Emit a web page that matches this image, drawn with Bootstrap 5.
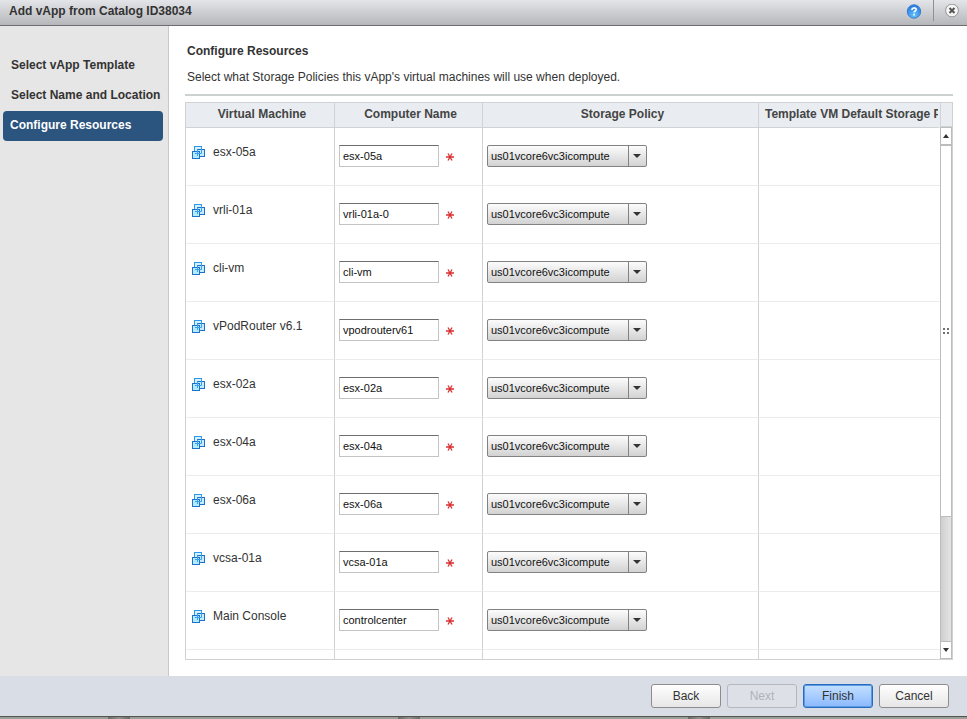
<!DOCTYPE html>
<html lang="en">
<head>
<meta charset="utf-8">
<meta name="viewport" content="width=device-width, initial-scale=1">
<title>Add vApp from Catalog ID38034</title>
<link href="https://cdn.jsdelivr.net/npm/bootstrap@5.3.0/dist/css/bootstrap.min.css" rel="stylesheet">
<style>
  body { font-family: "Liberation Sans", Arial, sans-serif; font-size: 12px; line-height: 18px; color: #333; background: #9b9f9a; }
  .titlebar { height: 26px; padding: 0 6px 0 9px; background: linear-gradient(#e4e5e8, #b6b7bb); border-bottom: 1px solid #6c6d71; }
  .titlebar h1 { font-size: 12px; line-height: 22px; }
  .tool { width: 16px; height: 16px; line-height: 0; }
  .tool-rule { width: 1px; height: 21px; background: #8f9095; margin: 0 11px; }
  .steps { width: 169px; padding: 24px 5px 0 3px; background: #e6e6e6; border-right: 1px solid #c8c8c8; }
  .step { height: 30px; padding: 0 0 0 8px; line-height: 30px; font-weight: bold; color: #333; text-decoration: none; white-space: nowrap; }
  .step.current { height: 30px; padding-left: 7px; line-height: 28px; margin-top: 1px; background: #2b547e; color: #fff; border-radius: 4px; }
  .content { padding: 16px 14px 16px 16px; }
  .content h2 { font-size: 12px; line-height: 18px; padding-left: 2px; }
  .intro { padding: 0 0 8px 2px; margin-top: 8px; border-bottom: 2px solid #ccd1d2; }
  .frame { margin-top: 6px; border: 1px solid #d0d2d3; }
  .vm-grid { table-layout: fixed; border-collapse: separate; border-spacing: 0; width: 100%; }
  .vm-grid th { height: 25px; padding: 0 0 2px 4px; line-height: 20px; text-align: center; background: #e9edf1; border-bottom: 1px solid #d0d2d3; border-right: 1px solid #d0d2d3; white-space: nowrap; overflow: hidden; color: #444; }
  .vm-grid th:last-child { text-align: left; padding-left: 6px; border-right: 2px solid #e9edf1; }
  .vm-grid td { height: 58px; padding: 17px 4px 0; vertical-align: top; border-bottom: 1px solid #ececec; border-right: 1px solid #d0d2d3; }
  .vm-grid td:first-child { padding: 15px 0 0 6px; }
  .vm-grid td:last-child { border-right: 0; }
  .c1 { width: 149px; } .c2 { width: 148px; } .c3 { width: 276px; }
  .vm-icon { width: 13px; height: 13px; margin: 3px 8px 0 0; }
  .name-box { width: 100px; height: 22px; padding: 0 3px; border: 1px solid #c4c4c4; border-top-color: #6e6e6e; font-size: 11px; color: #111; background: #fff; border-radius: 0; }
  .star { width: 8px; height: 8px; margin: 2px 0 0 7px; }
  .pick { width: 160px; height: 22px; }
  .pick select { appearance: none; width: 100%; height: 22px; padding: 0 20px 0 3px; border: 1px solid #828282; border-radius: 2px; font-size: 11px; color: #111; background: linear-gradient(#828282, #828282) right 17px top / 1px 100% no-repeat, linear-gradient(#fcfcfc, #d2d2d2); }
  .pick::after { content: ""; position: absolute; right: 6px; top: 9px; border: 4px solid transparent; border-top: 4px solid #333; border-bottom: 0; pointer-events: none; }
  .scroller { width: 12px; }
  .corner { height: 24px; background: #e9edf1; border-left: 1px solid #d0d2d3; border-bottom: 1px solid #d0d2d3; }
  .track { background: linear-gradient(90deg, #cfcfcf, #e4e4e4); border: solid #bcbcbc; border-width: 0 1px; }
  .arrow { width: 12px; height: 18px; padding: 0; border: 1px solid #bcbcbc; background: #fff; line-height: 0; }
  .thumb { height: 75%; background: #fff; border: solid #bcbcbc; border-width: 1px 0; }
  .dialog-foot { height: 41px; padding: 8px 18px 0 0; gap: 6px; background: #d9dee6; border-bottom: 1px solid #50544f; }
  .act { width: 70px; height: 24px; padding: 0; font-size: 12px; line-height: 20px; color: #333; border: 1px solid #8c8c8c; border-radius: 3px; background: linear-gradient(#fff, #e6e6e6); }
  .act:disabled { color: #aeb3b8; border-color: #b3b8be; background: #dde1e7; opacity: 1; }
  .act.go { border: 1px solid #2a6bbd; box-shadow: inset 0 0 0 1px #5b9ae6; background: linear-gradient(#c4e0ff, #8bb9ff); }
  .backdrop-strip { height: 2px; background: repeating-linear-gradient(90deg, #9b9f9a 0 108px, #696b68 108px, #90928f 119px, #696b68 130px, #9b9f9a 130px 290px); }
</style>
</head>
<body>
<svg class="d-none" aria-hidden="true">
  <symbol id="vm" viewBox="0 0 13 13">
    <rect x="2.500" y=".5" width="7" height="7" fill="#d3f2ff" stroke="#2f97e8"/>
    <rect x="5.500" y="3.500" width="7" height="7" fill="#c4ecff" stroke="#1d6fc9"/>
    <rect x=".5" y="5.500" width="7" height="7" fill="#b5e9fc" stroke="#1d73cc"/>
    <path d="M9.500 1v6.500H3M5.500 10V3.500" fill="none" stroke="#3d9fec"/>
  </symbol>
  <symbol id="req" viewBox="0 0 8 8"><path d="M0 4h8M2 .5l4 7M6 .5l-4 7" stroke="#dc2f2f" stroke-width="1.300" fill="none"/></symbol>
</svg>
<div class="d-flex flex-column vh-100 overflow-hidden">
  <header class="titlebar d-flex flex-shrink-0">
    <h1 class="fw-bold mb-0 flex-grow-1">Add vApp from Catalog ID38034</h1>
    <button class="tool btn p-0 border-0 mt-1" type="button" aria-label="Help">
      <svg width="16" height="16" viewBox="0 0 16 16"><defs><radialGradient id="hb" cx=".5" cy=".8" r=".8"><stop offset="0" stop-color="#65c2ff"/><stop offset="1" stop-color="#2575df"/></radialGradient></defs><circle cx="8" cy="7.500" r="6.700" fill="url(#hb)" stroke="#3b7cd0"/><path d="M5.900 6c0-2.700 4.400-2.700 4.400-.4 0 1.400-2.200 1.400-2.200 3M8.100 9.800v1.600" fill="none" stroke="#fff" stroke-width="1.600"/></svg>
    </button>
    <span class="tool-rule"></span>
    <button class="tool btn p-0 border-0 mt-1" type="button" aria-label="Close">
      <svg width="16" height="16" viewBox="0 0 16 16"><circle cx="7" cy="6.500" r="6.400" fill="#f5f5f5" stroke="#929292"/><path d="M4.500 4l5 5M9.500 4l-5 5" stroke="#555" stroke-width="2"/></svg>
    </button>
  </header>

  <div class="d-flex flex-grow-1 bg-white overflow-hidden">
    <nav class="steps d-flex flex-column flex-shrink-0" aria-label="Wizard steps">
      <a class="step" href="#">Select vApp Template</a>
      <a class="step" href="#">Select Name and Location</a>
      <a class="step current" href="#" aria-current="step">Configure Resources</a>
    </nav>
    <main class="content d-flex flex-column flex-grow-1 overflow-hidden">
      <h2 class="fw-bold mb-0">Configure Resources</h2>
      <p class="intro mb-0">Select what Storage Policies this vApp's virtual machines will use when deployed.</p>
      <div class="frame d-flex flex-grow-1 overflow-hidden">
        <div class="flex-grow-1 overflow-hidden">
          <table class="vm-grid">
            <colgroup><col class="c1"><col class="c2"><col class="c3"><col></colgroup>
            <thead><tr><th>Virtual Machine</th><th>Computer Name</th><th>Storage Policy</th><th>Template VM Default Storage Policy</th></tr></thead>
            <tbody>
              <tr><td><div class="d-flex"><svg class="vm-icon"><use href="#vm"/></svg>esx-05a</div></td>
                <td><div class="d-flex align-items-center"><input class="name-box" aria-label="Computer name for esx-05a" value="esx-05a"><svg class="star"><use href="#req"/></svg></div></td>
                <td><div class="pick position-relative"><select aria-label="Storage policy for esx-05a"><option>us01vcore6vc3icompute</option></select></div></td><td></td></tr>
              <tr><td><div class="d-flex"><svg class="vm-icon"><use href="#vm"/></svg>vrli-01a</div></td>
                <td><div class="d-flex align-items-center"><input class="name-box" aria-label="Computer name for vrli-01a" value="vrli-01a-0"><svg class="star"><use href="#req"/></svg></div></td>
                <td><div class="pick position-relative"><select aria-label="Storage policy for vrli-01a"><option>us01vcore6vc3icompute</option></select></div></td><td></td></tr>
              <tr><td><div class="d-flex"><svg class="vm-icon"><use href="#vm"/></svg>cli-vm</div></td>
                <td><div class="d-flex align-items-center"><input class="name-box" aria-label="Computer name for cli-vm" value="cli-vm"><svg class="star"><use href="#req"/></svg></div></td>
                <td><div class="pick position-relative"><select aria-label="Storage policy for cli-vm"><option>us01vcore6vc3icompute</option></select></div></td><td></td></tr>
              <tr><td><div class="d-flex"><svg class="vm-icon"><use href="#vm"/></svg>vPodRouter v6.1</div></td>
                <td><div class="d-flex align-items-center"><input class="name-box" aria-label="Computer name for vPodRouter v6.1" value="vpodrouterv61"><svg class="star"><use href="#req"/></svg></div></td>
                <td><div class="pick position-relative"><select aria-label="Storage policy for vPodRouter v6.1"><option>us01vcore6vc3icompute</option></select></div></td><td></td></tr>
              <tr><td><div class="d-flex"><svg class="vm-icon"><use href="#vm"/></svg>esx-02a</div></td>
                <td><div class="d-flex align-items-center"><input class="name-box" aria-label="Computer name for esx-02a" value="esx-02a"><svg class="star"><use href="#req"/></svg></div></td>
                <td><div class="pick position-relative"><select aria-label="Storage policy for esx-02a"><option>us01vcore6vc3icompute</option></select></div></td><td></td></tr>
              <tr><td><div class="d-flex"><svg class="vm-icon"><use href="#vm"/></svg>esx-04a</div></td>
                <td><div class="d-flex align-items-center"><input class="name-box" aria-label="Computer name for esx-04a" value="esx-04a"><svg class="star"><use href="#req"/></svg></div></td>
                <td><div class="pick position-relative"><select aria-label="Storage policy for esx-04a"><option>us01vcore6vc3icompute</option></select></div></td><td></td></tr>
              <tr><td><div class="d-flex"><svg class="vm-icon"><use href="#vm"/></svg>esx-06a</div></td>
                <td><div class="d-flex align-items-center"><input class="name-box" aria-label="Computer name for esx-06a" value="esx-06a"><svg class="star"><use href="#req"/></svg></div></td>
                <td><div class="pick position-relative"><select aria-label="Storage policy for esx-06a"><option>us01vcore6vc3icompute</option></select></div></td><td></td></tr>
              <tr><td><div class="d-flex"><svg class="vm-icon"><use href="#vm"/></svg>vcsa-01a</div></td>
                <td><div class="d-flex align-items-center"><input class="name-box" aria-label="Computer name for vcsa-01a" value="vcsa-01a"><svg class="star"><use href="#req"/></svg></div></td>
                <td><div class="pick position-relative"><select aria-label="Storage policy for vcsa-01a"><option>us01vcore6vc3icompute</option></select></div></td><td></td></tr>
              <tr><td><div class="d-flex"><svg class="vm-icon"><use href="#vm"/></svg>Main Console</div></td>
                <td><div class="d-flex align-items-center"><input class="name-box" aria-label="Computer name for Main Console" value="controlcenter"><svg class="star"><use href="#req"/></svg></div></td>
                <td><div class="pick position-relative"><select aria-label="Storage policy for Main Console"><option>us01vcore6vc3icompute</option></select></div></td><td></td></tr>
              <tr><td></td><td></td><td></td><td></td></tr>
            </tbody>
          </table>
        </div>
        <div class="scroller d-flex flex-column flex-shrink-0">
          <div class="corner flex-shrink-0"></div>
          <button class="arrow flex-shrink-0" type="button" aria-label="Scroll up"><svg width="6" height="4"><path d="M0 4l3-4 3 4z" fill="#333"/></svg></button>
          <div class="track flex-grow-1">
            <div class="thumb d-flex align-items-center justify-content-center"><svg width="6" height="6"><path d="M0 0h2v2H0zM4 0h2v2H4zM0 4h2v2H0zM4 4h2v2H4z" fill="#707070"/></svg></div>
          </div>
          <button class="arrow flex-shrink-0" type="button" aria-label="Scroll down"><svg width="6" height="4"><path d="M0 0l3 4 3-4z" fill="#333"/></svg></button>
        </div>
      </div>
    </main>
  </div>

  <footer class="dialog-foot d-flex justify-content-end flex-shrink-0">
    <button class="btn act" type="button">Back</button>
    <button class="btn act" type="button" disabled>Next</button>
    <button class="btn act go" type="button">Finish</button>
    <button class="btn act" type="button">Cancel</button>
  </footer>
  <div class="backdrop-strip flex-shrink-0"></div>
</div>
<script src="https://cdn.jsdelivr.net/npm/bootstrap@5.3.0/dist/js/bootstrap.bundle.min.js"></script>
</body>
</html>
